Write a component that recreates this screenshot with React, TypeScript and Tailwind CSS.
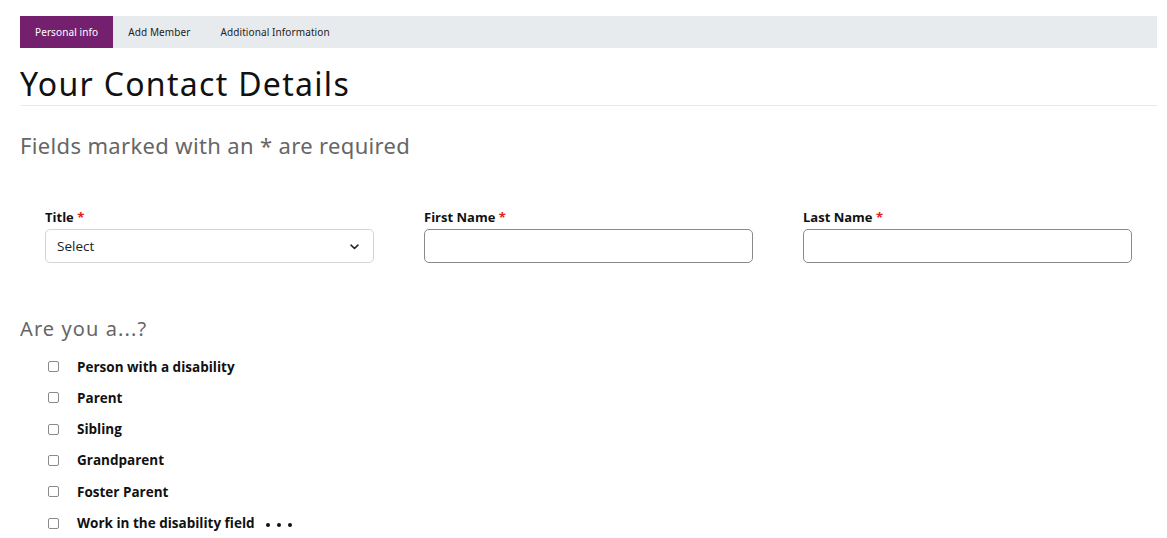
import React from 'react';

const tabs = ['Personal info', 'Add Member', 'Additional Information'];

const fields = [
  { label: 'Title', type: 'select' },
  { label: 'First Name', type: 'input' },
  { label: 'Last Name', type: 'input' },
];

const roles = [
  'Person with a disability',
  'Parent',
  'Sibling',
  'Grandparent',
  'Foster Parent',
  'Work in the disability field',
];

const App: React.FC = () => {
  return (
    <div className="min-h-[538px] bg-white pt-4 pl-5 pr-[10px] font-['Noto_Sans',sans-serif]">
      {/* Tabs */}
      <div className="flex h-8 items-stretch bg-[#e8ebee]">
        {tabs.map((tab, i) => (
          <div
            key={tab}
            className={
              i === 0
                ? 'flex items-center bg-[#74206e] px-[15px] pt-[1px] text-[10px] tracking-[0.1px] text-white'
                : 'flex items-center px-[15px] pt-[1px] text-[10px] tracking-[0.1px] text-[#222]'
            }
          >
            {tab}
          </div>
        ))}
      </div>

      {/* Heading */}
      <h1 className="mt-[18px] border-b border-[#eaeaea] pb-[3px] text-[32px] leading-[36px] tracking-[1.3px] text-[#111]">
        Your Contact Details
      </h1>
      <p className="mt-[25px] text-[22px] leading-[28px] tracking-[0.35px] text-[#666]">Fields marked with an * are required</p>

      {/* Fields */}
      <div className="mt-[49px] grid grid-cols-[329px_329px_329px] gap-x-[50px] pl-[25px] font-['Open_Sans',sans-serif]">
        {fields.map(f => (
          <div key={f.label}>
            <label className="block text-[13px] font-bold leading-[18px] text-[#111]">
              {f.label} <span className="text-[#e02020]">*</span>
            </label>
            {f.type === 'select' ? (
              <div className="mt-[3px] flex h-[34px] items-center justify-between rounded-[5px] border border-[#d4d4d4] pl-[11px] pr-[13px] text-[13.5px] text-[#222]">
                <span>Select</span>
                <svg width="11" height="11" viewBox="0 0 16 16" fill="none" stroke="#222" strokeWidth="2.2" strokeLinecap="round" strokeLinejoin="round">
                  <path d="M3 6l5 5 5-5" />
                </svg>
              </div>
            ) : (
              <div className="mt-[3px] h-[34px] rounded-[5px] border border-[#8a8a8a] bg-white" />
            )}
          </div>
        ))}
      </div>

      {/* Are you a */}
      <h2 className="mt-[52px] text-[20px] leading-[28px] tracking-[1.1px] text-[#666]">Are you a...?</h2>
      <div className="mt-[8px] flex flex-col pl-[28px] font-['Open_Sans',sans-serif]">
        {roles.map((r, i) => (
          <div key={r} className="flex h-[31.3px] items-center">
            <span className="h-[11px] w-[11px] rounded-[2px] border border-[#8a8a8a] bg-white" />
            <span className="ml-[18px] text-[13.5px] font-bold text-[#111]">{r}</span>
            {i === roles.length - 1 && (
              <span className="ml-[11px] flex gap-[7px] pt-[4px]">
                <span className="h-[4px] w-[4px] rounded-full bg-[#111]" />
                <span className="h-[4px] w-[4px] rounded-full bg-[#111]" />
                <span className="h-[4px] w-[4px] rounded-full bg-[#111]" />
              </span>
            )}
          </div>
        ))}
      </div>
    </div>
  );
};

export default App;
